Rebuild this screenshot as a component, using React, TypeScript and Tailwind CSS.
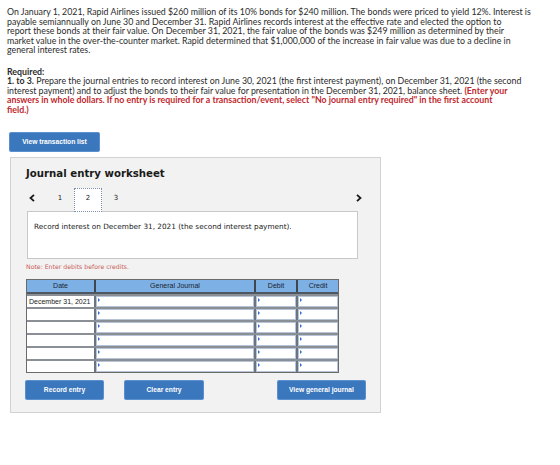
import React from "react";

const red = "text-[#c0282e] font-bold";

function Marker() {
  return (
    <span className="absolute left-[1px] top-[1px] h-0 w-0 border-y-[2px] border-l-[2px] border-y-transparent border-l-[#2f6fd0]" />
  );
}

function Cell() {
  return (
    <div className="border-l-2 border-[#6b7480]">
      <div className="relative h-full bg-white border border-[#b7c3d6]">
        <Marker />
      </div>
    </div>
  );
}

function Row({ date }: { date?: string }) {
  return (
    <div className="grid h-[13px] grid-cols-[67px_160px_42px_42px] border-t-2 border-[#8a8f96] first:border-t-0">
      <div className="flex items-center bg-white pl-[2px] text-[7px] leading-none text-[#222] font-['Liberation_Sans',sans-serif]">
        {date}
      </div>
      <Cell />
      <Cell />
      <Cell />
    </div>
  );
}

function BlueButton({ label, className }: { label: string; className?: string }) {
  return (
    <button
      className={`flex h-[18px] items-center justify-center rounded-[1px] bg-[#3b77bd] text-[6.7px] font-bold text-white font-['Liberation_Sans',sans-serif] shadow-[0_0_0_1px_#5a8fd0] ${className ?? ""}`}
    >
      {label}
    </button>
  );
}

export default function App() {
  return (
    <div className="h-[465px] w-[560px] bg-white pl-[7px] pt-[7px] font-['Lato',sans-serif] text-[#2b2b2b]">
      <div className="whitespace-nowrap text-[8.8px] leading-[9.5px]">
        <div>
          On January 1, 2021, Rapid Airlines issued $260 million of its 10% bonds for $240 million. The bonds were priced to yield 12%. Interest is
        </div>
        <div>
          payable semiannually on June 30 and December 31. Rapid Airlines records interest at the effective rate and elected the option to
        </div>
        <div>
          report these bonds at their fair value. On December 31, 2021, the fair value of the bonds was $249 million as determined by their
        </div>
        <div>
          market value in the over-the-counter market. Rapid determined that $1,000,000 of the increase in fair value was due to a decline in
        </div>
        <div>general interest rates.</div>

        <div className="mt-[12px] font-bold">Required:</div>
        <div>
          <span className="font-bold">1. to 3.</span> Prepare the journal entries to record interest on June 30, 2021 (the first interest payment), on December 31, 2021 (the second
        </div>
        <div>
          interest payment) and to adjust the bonds to their fair value for presentation in the December 31, 2021, balance sheet.{" "}
          <span className={red}>(Enter your</span>
        </div>
        <div className={red}>
          answers in whole dollars. If no entry is required for a transaction/event, select "No journal entry required" in the first account
        </div>
        <div className={red}>field.)</div>
      </div>

      <BlueButton label="View transaction list" className="ml-[3px] mt-[19px] w-[89px]" />

      {/* worksheet panel */}
      <div className="ml-[3px] mt-[6px] h-[256px] w-[371px] border border-[#d2d2d2] bg-[#f2f2f2] pl-[15px] pt-[9px]">
        <div className="text-[10.2px] font-bold leading-[14px] text-[#1a1a1a] font-['DejaVu_Sans',sans-serif]">
          Journal entry worksheet
        </div>

        {/* step tabs */}
        <div className="relative z-10 mt-[7px] flex h-[23px] w-[338px] items-start text-[7px] text-[#222] font-['DejaVu_Sans',sans-serif]">
          <div className="flex h-[20px] w-[20px] items-center pl-[3px]">
            <svg width="6" height="8" viewBox="0 0 6 8">
              <path d="M5 0.8 L1.5 4 L5 7.2" fill="none" stroke="#1a1a1a" strokeWidth="1.8" />
            </svg>
          </div>
          <div className="flex h-[20px] w-[28px] items-center justify-center">1</div>
          <div className="flex h-[24px] w-[28px] items-center justify-center border border-dotted border-[#7d8fae] bg-white pb-[3px]">
            2
          </div>
          <div className="flex h-[20px] w-[28px] items-center justify-center">3</div>
          <div className="flex-1" />
          <div className="flex h-[20px] w-[8px] items-center">
            <svg width="6" height="8" viewBox="0 0 6 8">
              <path d="M1 0.8 L4.5 4 L1 7.2" fill="none" stroke="#1a1a1a" strokeWidth="1.8" />
            </svg>
          </div>
        </div>

        <div className="ml-[1px] h-[48px] w-[331px] border border-[#c8c8c8] bg-white pl-[6px] pt-[11px] text-[7.3px] leading-[8px] text-[#222] font-['DejaVu_Sans',sans-serif]">
          Record interest on December 31, 2021 (the second interest payment).
        </div>

        <div className="mt-[4px] text-[6.2px] leading-[8px] text-[#c9605a] font-['DejaVu_Sans',sans-serif]">
          Note: Enter debits before credits.
        </div>

        {/* journal table */}
        <div className="mt-[8px] w-[313px] border border-[#6a6a6a]">
          <div className="grid h-[14px] grid-cols-[67px_160px_42px_42px] border-b-2 border-[#4f5760] bg-[#7db0e4] text-[7px] font-medium text-[#1a2430] font-['Liberation_Sans',sans-serif]">
            <div className="flex items-center justify-center">Date</div>
            <div className="flex items-center justify-center border-l-2 border-[#3f4650]">General Journal</div>
            <div className="flex items-center justify-center border-l-2 border-[#3f4650]">Debit</div>
            <div className="flex items-center justify-center border-l-2 border-[#3f4650]">Credit</div>
          </div>
          <Row date="December 31, 2021" />
          <Row />
          <Row />
          <Row />
          <Row />
          <Row />
        </div>

        <div className="mt-[8px] flex">
          <BlueButton label="Record entry" className="w-[77px]" />
          <BlueButton label="Clear entry" className="ml-[22px] w-[78px]" />
          <BlueButton label="View general journal" className="ml-[75px] w-[87px]" />
        </div>
      </div>
    </div>
  );
}
